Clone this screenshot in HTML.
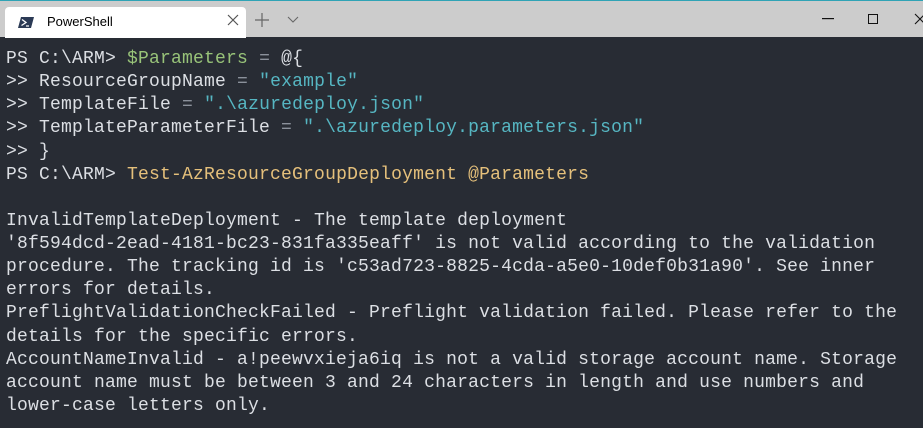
<!DOCTYPE html>
<html><head><meta charset="utf-8"><style>
html,body{margin:0;padding:0;width:923px;height:428px;overflow:hidden;background:#282c34}
.top{position:absolute;left:0;top:0;width:923px;height:37px;background:#cccccc;border-top:1px solid #2fa3b5;box-sizing:border-box}
.tab{position:absolute;left:5px;top:6px;width:241px;height:31px;background:#fff;border-radius:4px 4px 0 0}
.tab .t{position:absolute;left:42px;top:7px;font:13px "Liberation Sans",sans-serif;color:#000}
.icon{position:absolute;left:13px;top:10px;width:16px;height:11px}
.x{position:absolute;left:222px;top:7px}
.plus{position:absolute;left:255px;top:12px}
.chev{position:absolute;left:287px;top:15px}
.term{position:absolute;left:6px;top:48px;font-family:"Liberation Mono",monospace;font-size:18px;letter-spacing:0.2px;line-height:23.13px;color:#dcdfe4;white-space:pre}
.g{color:#98c379}.c{color:#56b6c2}.y{color:#e5c07b}.o{color:#8b919b}
</style></head><body>
<div class="top">
<div class="tab">
<svg class="icon" viewBox="0 0 16 11"><polygon points="3,0 16,0 13,11 0,11" fill="#2b3a55"/><path d="M4 2.5 L8 5.5 L3.5 8.5" stroke="#fff" stroke-width="1.3" fill="none"/><path d="M8 9 H11" stroke="#fff" stroke-width="1.2"/></svg>
<span class="t">PowerShell</span>
<svg class="x" width="12" height="12" viewBox="0 0 12 12"><path d="M1 1L11 11M11 1L1 11" stroke="#555" stroke-width="1.2"/></svg>
</div>
<svg class="plus" width="14" height="14" viewBox="0 0 14 14"><path d="M7 0V14M0 7H14" stroke="#666" stroke-width="1.2"/></svg>
<svg class="chev" width="12" height="8" viewBox="0 0 12 8"><path d="M1 1L6 6L11 1" stroke="#666" stroke-width="1.1" fill="none"/></svg>
<svg style="position:absolute;left:822px;top:17px" width="12" height="2"><rect width="12" height="1.2" fill="#111"/></svg>
<svg style="position:absolute;left:868px;top:13px" width="10" height="10"><rect x="0.5" y="0.5" width="9" height="9" fill="none" stroke="#111" stroke-width="1"/></svg>
<svg style="position:absolute;left:914px;top:12px" width="12" height="12"><path d="M1 1L11 11M11 1L1 11" stroke="#111" stroke-width="1.1"/></svg>
</div>
<div class="term">PS C:\ARM&gt; <span class="g">$Parameters</span> <span class="o">=</span> @{
&gt;&gt; ResourceGroupName <span class="o">=</span> <span class="c">"example"</span>
&gt;&gt; TemplateFile <span class="o">=</span> <span class="c">".\azuredeploy.json"</span>
&gt;&gt; TemplateParameterFile <span class="o">=</span> <span class="c">".\azuredeploy.parameters.json"</span>
&gt;&gt; }
PS C:\ARM&gt; <span class="y">Test-AzResourceGroupDeployment</span> <span class="y">@Parameters</span>

InvalidTemplateDeployment - The template deployment
'8f594dcd-2ead-4181-bc23-831fa335eaff' is not valid according to the validation
procedure. The tracking id is 'c53ad723-8825-4cda-a5e0-10def0b31a90'. See inner
errors for details.
PreflightValidationCheckFailed - Preflight validation failed. Please refer to the
details for the specific errors.
AccountNameInvalid - a!peewvxieja6iq is not a valid storage account name. Storage
account name must be between 3 and 24 characters in length and use numbers and
lower-case letters only.</div>
</body></html>
